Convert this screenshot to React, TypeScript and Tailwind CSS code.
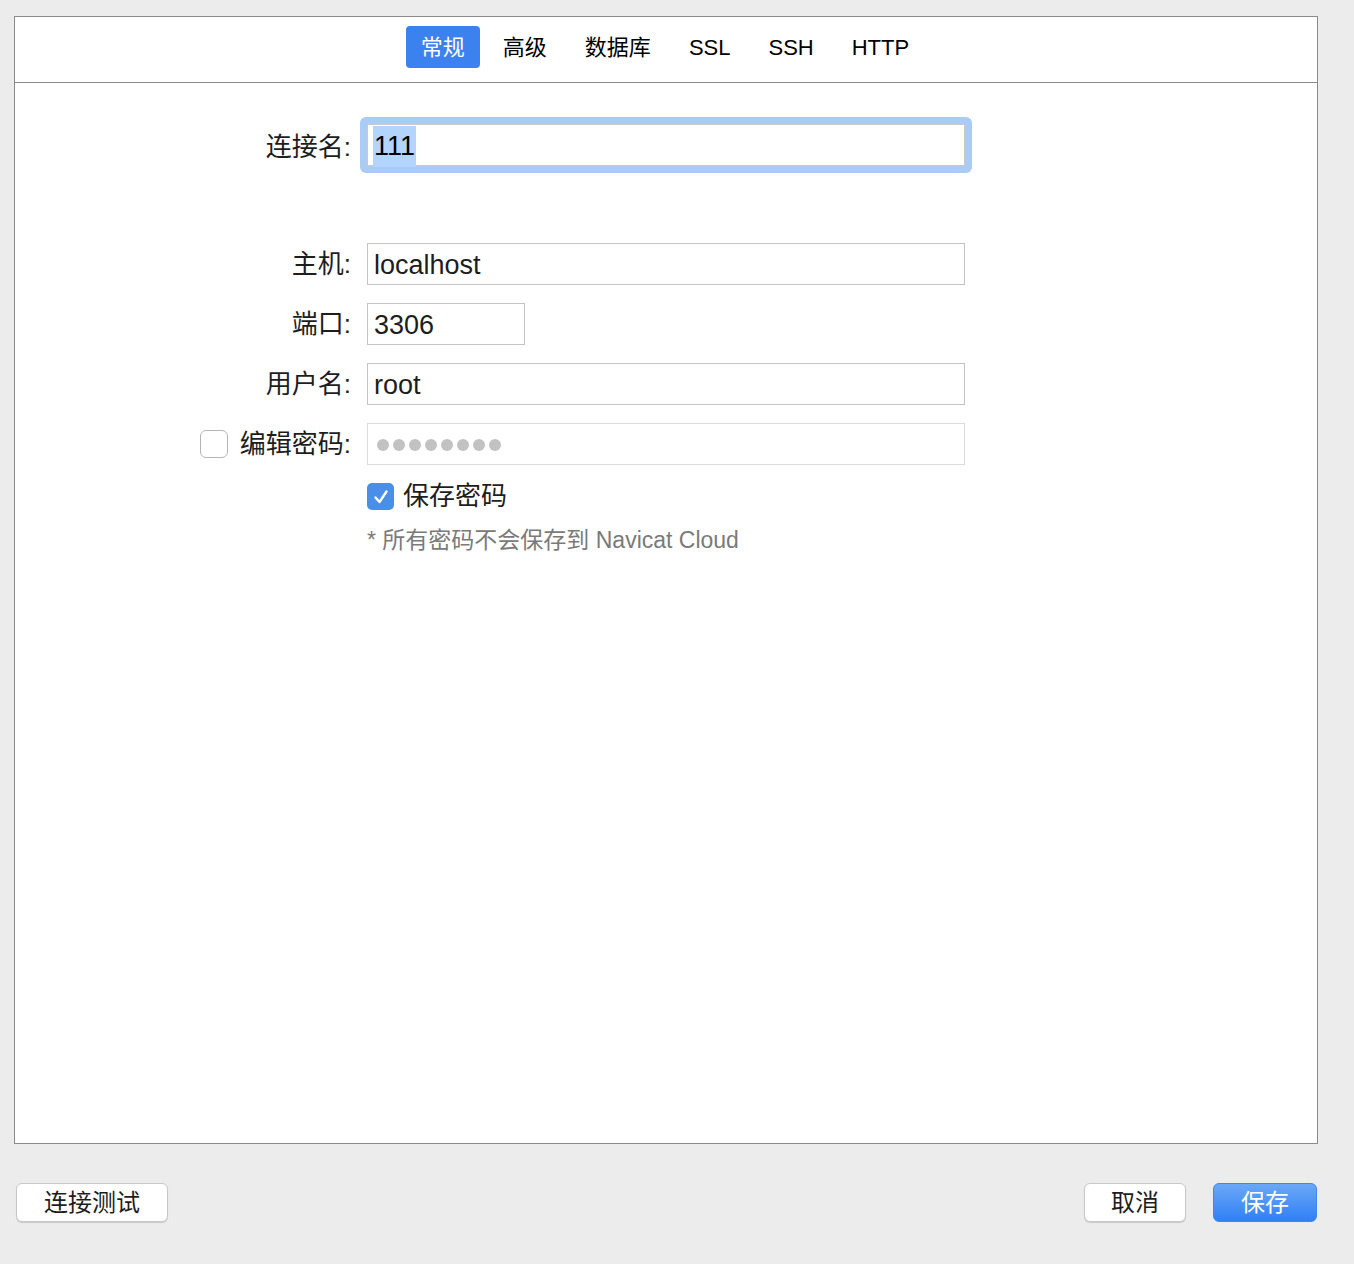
import React from "react";

const font = {
  fontFamily: '"Liberation Sans", "Noto Sans CJK SC", sans-serif',
};

const tabs = ["常规", "高级", "数据库", "SSL", "SSH", "HTTP"];

type FieldRowProps = {
  label: string;
  value: string;
  width?: string;
};

const FieldRow = ({ label, value, width = "w-[598px]" }: FieldRowProps) => {
  return (
    <div className="flex h-[42px] items-center">
      <div className="w-[352px] pr-[16px] text-right text-[26px] text-[#1d1d1d]">{label}</div>
      <div
        className={`flex h-[42px] ${width} items-center border border-[#c4c4c4] bg-white px-[6px] pt-[3px] text-[27px] text-[#1d1d1d]`}
      >
        {value}
      </div>
    </div>
  );
};

export default function App() {
  return (
    <div className="h-[1264px] w-[1354px] bg-[#ececec]" style={font}>
      <div className="h-[16px]" />
      <div className="ml-[14px] flex h-[1128px] w-[1304px] flex-col border border-[#8a8a8a] bg-white">
        <div className="flex h-[66px] items-start justify-center border-b border-[#8a8a8a] pl-[2px] pt-[9px]">
          {tabs.map((tab, i) =>
            i === 0 ? (
              <div
                key={tab}
                className="mr-[4px] flex h-[42px] items-center rounded-[4px] bg-[#3b82f0] px-[15px] text-[22px] text-white"
              >
                {tab}
              </div>
            ) : (
              <div key={tab} className="flex h-[42px] items-center px-[19px] text-[22px] text-black">
                {tab}
              </div>
            )
          )}
        </div>

        <div className="flex flex-col pt-[34px]">
          <div className="flex h-[56px] items-center">
            <div className="w-[345px] pr-[9px] pt-[4px] text-right text-[26px] text-[#1d1d1d]">连接名:</div>
            <div className="h-[56px] w-[612px] rounded-[6px] bg-[#a9cbf4] p-[7px]">
              <div className="flex h-[42px] items-center border border-[#c9c9c9] bg-white px-[5px] pt-[3px] text-[27px] text-black">
                <span className="bg-[#b3d4fc] px-[1px]">111</span>
              </div>
            </div>
          </div>

          <div className="flex flex-col gap-[18px] pt-[70px]">
            <FieldRow label="主机:" value="localhost" />
            <FieldRow label="端口:" value="3306" width="w-[158px]" />
            <FieldRow label="用户名:" value="root" />
            <div className="flex h-[42px] items-center">
              <div className="flex w-[352px] items-center justify-end pr-[16px] text-[26px] text-[#1d1d1d]">
                <div className="mr-[12px] h-[28px] w-[28px] rounded-[6px] border border-[#b5b5b5] bg-white" />
                <span>编辑密码:</span>
              </div>
              <div className="flex h-[42px] w-[598px] items-center gap-[4px] border border-[#dcdcdc] bg-white px-[9px] pt-[2px]">
                {Array.from({ length: 8 }).map((_, index) => (
                  <span key={index} className="h-[12px] w-[12px] rounded-full bg-[#c2c2c2]" />
                ))}
              </div>
            </div>
          </div>

          <div className="ml-[352px] mt-[12px] flex items-center gap-[9px]">
            <div className="flex h-[27px] w-[27px] items-center justify-center rounded-[5px] bg-[#4a8fe7]">
              <svg width="22" height="22" viewBox="0 0 22 22" fill="none">
                <path d="M5.5 11.5l4 4.5L16.5 5.5" stroke="white" strokeWidth="2.4" strokeLinecap="round" strokeLinejoin="round" />
              </svg>
            </div>
            <span className="text-[26px] text-[#1d1d1d]">保存密码</span>
          </div>
          <div className="ml-[352px] mt-[7px] text-[23px] text-[#7a7a7a]">* 所有密码不会保存到 Navicat Cloud</div>
        </div>
      </div>

      <div className="mt-[39px] flex items-center justify-between pl-[16px] pr-[37px]">
        <button className="flex h-[39px] w-[152px] items-center justify-center rounded-[6px] border border-[#c8c8c8] bg-white text-[24px] text-[#1d1d1d] shadow-[0_1px_1px_rgba(0,0,0,0.15)]">
          连接测试
        </button>
        <div className="flex gap-[27px]">
          <button className="flex h-[39px] w-[102px] items-center justify-center rounded-[6px] border border-[#c8c8c8] bg-white text-[24px] text-[#1d1d1d] shadow-[0_1px_1px_rgba(0,0,0,0.15)]">
            取消
          </button>
          <button className="flex h-[39px] w-[104px] items-center justify-center rounded-[6px] border border-[#3f86f2] bg-gradient-to-b from-[#6aa8f7] to-[#2f7ff5] text-[24px] text-white">
            保存
          </button>
        </div>
      </div>
    </div>
  );
}
